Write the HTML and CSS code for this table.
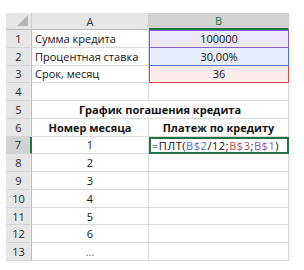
FILE: index.html
```html
<!DOCTYPE html>
<html>
<head>
<meta charset="utf-8">
<link rel="stylesheet" href="styles.css">
</head>
<body>
<div class="sheet">
  <div class="corner"><span class="tri"></span></div>
  <div class="colhead">A</div>
  <div class="colhead sel">B</div>

  <div class="rowhead">1</div>
  <div class="cell">Сумма кредита</div>
  <div class="cell c ref-purple">100000</div>

  <div class="rowhead">2</div>
  <div class="cell">Процентная ставка</div>
  <div class="cell c ref-blue">30,00%</div>

  <div class="rowhead">3</div>
  <div class="cell">Срок, месяц</div>
  <div class="cell c ref-red">36</div>

  <div class="rowhead">4</div>
  <div class="cell"></div>
  <div class="cell"></div>

  <div class="rowhead">5</div>
  <div class="cell span b">График погашения кредита</div>

  <div class="rowhead">6</div>
  <div class="cell c b">Номер месяца</div>
  <div class="cell c b">Платеж по кредиту</div>

  <div class="rowhead selrow">7</div>
  <div class="cell c">1</div>
  <div class="cell active">=ПЛТ(<span class="fb">B$2</span>/12;<span class="fr">B$3</span>;<span class="fp">B$1</span>)</div>

  <div class="rowhead">8</div>
  <div class="cell c">2</div>
  <div class="cell"></div>

  <div class="rowhead">9</div>
  <div class="cell c">3</div>
  <div class="cell"></div>

  <div class="rowhead">10</div>
  <div class="cell c">4</div>
  <div class="cell"></div>

  <div class="rowhead">11</div>
  <div class="cell c">5</div>
  <div class="cell"></div>

  <div class="rowhead">12</div>
  <div class="cell c">6</div>
  <div class="cell"></div>

  <div class="rowhead">13</div>
  <div class="cell c dots">...</div>
  <div class="cell"></div>
</div>
</body>
</html>
```

FILE: styles.css
```css
html, body {
  margin: 0;
  padding: 0;
  background: #ffffff;
}
body {
  padding: 13px 0 0 6px;
  font-family: "Open Sans", "Noto Sans", sans-serif;
  font-size: 11px;
  color: #141414;
}
.sheet {
  display: grid;
  grid-template-columns: 26px 117px 140px;
  grid-template-rows: 17px repeat(13, 17.77px);
  width: 283px;
  box-shadow: 3px 0 4px -2px rgba(0,0,0,0.08);
}
.corner {
  background: #e6e6e6;
  border-right: 1px solid #cfcfcf;
  border-bottom: 1px solid #bdbdbd;
  position: relative;
  box-sizing: border-box;
}
.tri {
  position: absolute;
  right: 3px;
  bottom: 3px;
  width: 0;
  height: 0;
  border-left: 11px solid transparent;
  border-bottom: 11px solid #b5b5b5;
}
.colhead {
  background: #e6e6e6;
  border-right: 1px solid #cfcfcf;
  border-bottom: 1px solid #bdbdbd;
  box-sizing: border-box;
  display: flex;
  align-items: center;
  justify-content: center;
  color: #333;
  font-size: 11px;
}
.colhead.sel {
  background: #d2d2d2;
  color: #217346;
  border-bottom: 2px solid #217346;
}
.rowhead {
  background: #e6e6e6;
  border-right: 1px solid #bdbdbd;
  border-bottom: 1px solid #d4d4d4;
  box-sizing: border-box;
  display: flex;
  align-items: center;
  justify-content: center;
  color: #2a2a2a;
  font-size: 11px;
}
.rowhead.selrow {
  background: #d2d2d2;
  border-right: 2px solid #217346;
}
.cell {
  border-right: 1px solid #dadada;
  border-bottom: 1px solid #dadada;
  box-sizing: border-box;
  display: flex;
  align-items: center;
  padding: 0 3px;
  white-space: nowrap;
  overflow: visible;
}
.c { justify-content: center; }
.b { font-weight: 700; }
.span {
  grid-column: 2 / span 2;
  justify-content: center;
}
.ref-purple {
  background: #ece8f8;
  border: 1px solid #7f62c6;
}
.ref-blue {
  background: #e8eefa;
  border: 1px solid #4f73d1;
  border-top: none;
}
.ref-red {
  background: #fbeaea;
  border: 1px solid #d05050;
  border-top: none;
}
.active {
  border: 2px solid #217346;
  padding-left: 1px;
  letter-spacing: 0.55px;
}
.fb { color: #4f73d1; }
.fr { color: #c0504d; }
.fp { color: #8064c2; }
.dots { color: #666; }
```
